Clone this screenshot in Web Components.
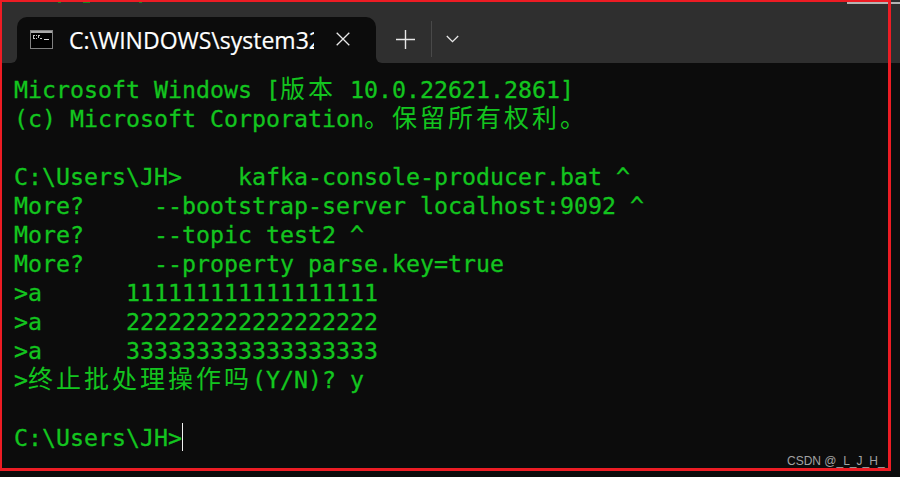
<!DOCTYPE html>
<html lang="zh">
<head>
<meta charset="utf-8">
<title>Command Prompt</title>
<style>
html, body { margin: 0; background: #0c0c0c; }
</style>
</head>
<body>
<term-window>
    <term-tab slot="tabs">C:\WINDOWS\system32\cmd.exe</term-tab>
    <term-line>Microsoft Windows [<term-cjk>版本</term-cjk> 10.0.22621.2861]</term-line>
    <term-line>(c) Microsoft Corporation<term-cjk>。保留所有权利。</term-cjk></term-line>
    <term-line></term-line>
    <term-line>C:\Users\JH&gt;    kafka-console-producer.bat ^</term-line>
    <term-line>More?     --bootstrap-server localhost:9092 ^</term-line>
    <term-line>More?     --topic test2 ^</term-line>
    <term-line>More?     --property parse.key=true</term-line>
    <term-line>&gt;a      111111111111111111</term-line>
    <term-line>&gt;a      222222222222222222</term-line>
    <term-line>&gt;a      333333333333333333</term-line>
    <term-line>&gt;<term-cjk>终止批处理操作吗</term-cjk>(Y/N)? y</term-line>
    <term-line></term-line>
    <term-line cursor>C:\Users\JH&gt;</term-line>
    <span slot="mark">CSDN @_L_J_H_</span>
</term-window>

<script>
class TermWindow extends HTMLElement {
    constructor() {
        super();
        this.attachShadow({ mode: "open" }).innerHTML = /*html*/`
<style>
:host {
    display: flex;
    flex-direction: column;
    position: relative;
    width: 900px;
    height: 477px;
    overflow: hidden;
    background: #0c0c0c;
}
header {
    display: flex;
    height: 63px;
    flex: none;
}
.lead {
    width: 17px;
    flex: none;
    background: #2f2f2f;
    border-radius: 8px 0 6px 0;
}
.rest {
    flex: 1;
    display: flex;
    align-items: flex-start;
    background: #2f2f2f;
    border-bottom-left-radius: 6px;
    color: #fff;
}
.tabs {
    display: flex;
    padding-top: 17px;
    background: #2f2f2f;
}
.new, .menu {
    display: flex;
    align-items: center;
    justify-content: center;
    height: 36px;
    margin-top: 21px;
}
.new { width: 51px; padding-left: 4px; border-right: 1px solid #494949; }
.menu { width: 41px; }
main {
    flex: 1;
    padding: 0 14px;
    margin-top: 12px;
}
.frame {
    position: absolute;
    left: 0;
    top: 0;
    width: 886px;
    height: 466px;
    border: solid #ed1c24;
    border-width: 2px 3px 3px 2px;
    pointer-events: none;
}
.edge {
    position: absolute;
    left: 847px;
    top: 2px;
    width: 53px;
    height: 2px;
    background: #b4b4b4;
}
.speck {
    position: absolute;
    top: 2px;
    height: 1px;
    background: #158a22;
}
.mark {
    position: absolute;
    left: 787px;
    top: 454px;
    font: 12px/14px "Liberation Sans", sans-serif;
    color: #a2a2a2;
}
</style>
<header>
    <div class="lead"></div>
    <div class="tabs"><slot name="tabs"></slot></div>
    <div class="rest">
        <div class="new">
            <svg width="19" height="19" viewBox="0 0 19 19" fill="none" stroke="#e8e8e8" stroke-width="1.4"><path d="M9.5 0v19M0 9.5h19"/></svg>
        </div>
        <div class="menu">
            <svg width="13" height="8" viewBox="0 0 13 8" fill="none" stroke="#e8e8e8" stroke-width="1.3"><path d="M.8 1l5.7 5.7L12.2 1"/></svg>
        </div>
    </div>
</header>
<main><slot></slot></main>
<div class="edge"></div>
<i class="speck" style="left:58px;width:3px"></i>
<i class="speck" style="left:83px;width:7px"></i>
<i class="speck" style="left:139px;width:3px"></i>
<div class="frame"></div>
<div class="mark"><slot name="mark"></slot></div>
`;
    }
}

class TermTab extends HTMLElement {
    constructor() {
        super();
        this.attachShadow({ mode: "open" }).innerHTML = /*html*/`
<style>
:host {
    display: flex;
    align-items: center;
    width: 359px;
    height: 46px;
    box-sizing: border-box;
    padding: 0 0 0 13px;
    background: #0c0c0c;
    border-radius: 10px 10px 0 0;
    color: #fff;
}
svg { flex: none; }
.icon { margin-bottom: 1px; }
.title {
    margin-left: 16px;
    width: 245px;
    overflow: hidden;
    white-space: nowrap;
    font: 23px/30px "Open Sans", sans-serif;
    -webkit-text-stroke: .2px #fff;
}
.close { flex: none; margin: 0 0 2px 22px; }
</style>
<svg class="icon" width="23" height="19" viewBox="0 0 23 19">
    <rect x=".5" y=".5" width="22" height="18" fill="#000" stroke="#808080"/>
    <rect x="1" y="1" width="21" height="2" fill="#a8a8a8"/>
    <path d="M3 5h2v1H3zM3 6h1v2H3zM3 8h2v1H3zM6 5h1v1H6zM6 8h1v1H6zM8 5h2v1H8zM8 6h1v2H8zM10 8h2v1h-2z" fill="#c4c4c4"/>
    <path d="M14 9h5v1h-5z" fill="#d8d8d8"/>
</svg>
<div class="title"><slot></slot></div>
<svg class="close" width="14" height="14" viewBox="0 0 14 14" fill="none" stroke="#e8e8e8" stroke-width="1.3"><path d="M.7.7l12.6 12.6M13.3.7L.7 13.3"/></svg>
`;
    }
}

class TermLine extends HTMLElement {
    constructor() {
        super();
        this.attachShadow({ mode: "open" }).innerHTML = `<style>
:host {
    display: block;
    height: 29px;
    font: 23.25px/29px "DejaVu Sans Mono", "Noto Sans CJK SC", monospace;
    color: #13c51f;
    -webkit-text-stroke: .3px #13c51f;
}
slot { white-space: pre; }
.cursor {
    display: inline-block;
    width: 1px;
    height: 28px;
    vertical-align: top;
    background: #f2f2f2;
}
</style><slot></slot>${this.hasAttribute("cursor") ? '<span class="cursor"></span>' : ""}`;
    }
}

class TermCjk extends HTMLElement {
    constructor() {
        super();
        // no whitespace around the slot: it would show up as a gap in the cell grid
        this.attachShadow({ mode: "open" }).innerHTML = `<style>
:host {
    font: 25px/0 "Noto Sans CJK SC", sans-serif;
    letter-spacing: 3px;
    -webkit-text-stroke: 0;
}
</style><slot></slot>`;
    }
}

customElements.define("term-window", TermWindow);
customElements.define("term-tab", TermTab);
customElements.define("term-line", TermLine);
customElements.define("term-cjk", TermCjk);
</script>
</body>
</html>
